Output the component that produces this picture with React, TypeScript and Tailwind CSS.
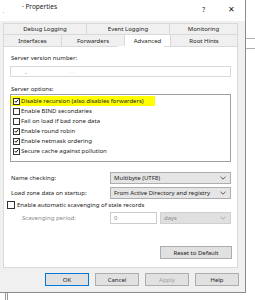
import React from "react";

function Check({ checked, className = "" }: { checked?: boolean; className?: string }) {
  return (
    <div className={"w-[7px] h-[7px] border border-[#333333] bg-white flex items-center justify-center shrink-0 " + className}>
      {checked && (
        <svg width="6" height="6" viewBox="0 0 6 6">
          <polyline points="0.8,3 2.3,4.6 5.2,1.2" fill="none" stroke="#000" strokeWidth="1.1" />
        </svg>
      )}
    </div>
  );
}

function Chevron({ color = "#333" }: { color?: string }) {
  return (
    <svg width="6" height="4" viewBox="0 0 6 4">
      <polyline points="0.5,0.8 3,3.2 5.5,0.8" fill="none" stroke={color} strokeWidth="0.8" />
    </svg>
  );
}

function ListItem({ label, checked, hl }: { label: string; checked?: boolean; hl?: boolean }) {
  return (
    <div className={"h-[10px] flex items-center gap-[1px] pl-[2px] " + (hl ? "bg-[#ffff00] w-[144px]" : "")}>
      <Check checked={checked} />
      <span className="leading-[8px] whitespace-nowrap">{label}</span>
    </div>
  );
}

function Btn({ label, def, disabled, className = "" }: { label: string; def?: boolean; disabled?: boolean; className?: string }) {
  return (
    <div
      className={
        "h-[13px] flex items-center justify-center border bg-[#e1e1e1] " +
        (def ? "border-[#0078d7] " : "border-[#adadad] ") +
        (disabled ? "text-[#a0a0a0] " : "text-[#222222] ") +
        className
      }
    >
      <span className="leading-[8px]">{label}</span>
    </div>
  );
}

function Tab({ label, w, selected }: { label: string; w: string; selected?: boolean }) {
  return (
    <div
      className={
        "h-full flex items-center justify-center border-t border-l border-[#d9d9d9] " +
        (selected ? "bg-white " : "bg-[#f0f0f0] ") +
        w
      }
    >
      <span className="leading-[8px] whitespace-nowrap">{label}</span>
    </div>
  );
}

export default function App() {
  return (
    <div className="w-[255px] h-[300px] bg-white relative overflow-hidden text-[6px] text-[#222222] font-['Segoe_UI','Noto_Sans',sans-serif]">
      {/* background window lines */}
      <div className="absolute left-[246px] top-[38px] w-[9px] h-px bg-[#b0b0b0]" />
      <div className="absolute left-[246px] top-[48px] w-[9px] h-px bg-[#b0b0b0]" />
      <div className="absolute left-[5px] top-[293px] w-px h-[7px] bg-[#9a9a9a]" />
      <div className="absolute left-[7px] top-[293px] w-px h-[7px] bg-[#9a9a9a]" />

      <div className="w-[246px] h-[293px] border-r border-b border-[#8c8c8c] bg-[#f0f0f0] flex flex-col">
        {/* title bar */}
        <div className="h-[21px] bg-white flex items-start relative">
          <div className="absolute left-[3px] top-[12px] w-px h-px bg-[#c8c8c8]" />
          <span className="ml-[22px] mt-[3px] leading-[8px] text-[6.5px]">· Properties</span>
          <span className="ml-auto mt-[6px] leading-[8px] text-[6.5px] mr-[23px]">?</span>
          <span className="mt-[5px] leading-[8px] text-[8px] mr-[10px] font-light">✕</span>
        </div>

        {/* tabs */}
        <div className="mt-[2px] ml-[3px] w-[235px] flex flex-col">
          <div className="h-[11px] flex border-r border-[#d9d9d9]">
            <Tab label="Debug Logging" w="w-[83px]" />
            <Tab label="Event Logging" w="w-[83px]" />
            <Tab label="Monitoring" w="flex-1" />
          </div>
          <div className="h-[12px] flex border-r border-[#d9d9d9]">
            <Tab label="Interfaces" w="w-[58px]" />
            <Tab label="Forwarders" w="w-[63px]" />
            <Tab label="Advanced" w="w-[46px]" selected />
            <Tab label="Root Hints" w="flex-1" />
          </div>
        </div>

        {/* panel */}
        <div className="ml-[3px] w-[235px] h-[222px] bg-white border border-t-0 border-[#d9d9d9] flex flex-col px-[6px]">
          <div className="h-px flex">
            <div className="w-[114px] bg-[#d9d9d9] ml-[-6px]" />
            <div className="w-[46px]" />
            <div className="flex-1 bg-[#d9d9d9] -mr-[6px]" />
          </div>
          <div className="mt-[7px] ml-[1px] leading-[8px]">Server version number:</div>
          <div className="mt-[4px] h-[11px] border border-[#d9d9d9] flex items-center relative">
            <span className="ml-[14px] leading-[6px] text-[#444]">.</span>
            <span className="ml-[42px] leading-[6px] text-[#c8c8c8] text-[5px]">· · ·</span>
          </div>
          <div className="mt-[8px] ml-[1px] leading-[8px]">Server options:</div>
          <div className="mt-[1px] h-[68px] border border-[#a0a0a0] flex flex-col pt-[1px]">
            <ListItem label="Disable recursion (also disables forwarders)" checked hl />
            <ListItem label="Enable BIND secondaries" />
            <ListItem label="Fail on load if bad zone data" />
            <ListItem label="Enable round robin" checked />
            <ListItem label="Enable netmask ordering" checked />
            <ListItem label="Secure cache against pollution" checked />
          </div>

          <div className="mt-[10px] h-[12px] flex items-center">
            <span className="ml-[1px] w-[99px] leading-[8px]">Name checking:</span>
            <div className="flex-1 h-full border border-[#adadad] bg-[#e5e5e5] flex items-center justify-between pl-[3px] pr-[4px]">
              <span className="leading-[8px]">Multibyte (UTF8)</span>
              <Chevron />
            </div>
          </div>
          <div className="mt-[3px] h-[12px] flex items-center">
            <span className="ml-[1px] w-[99px] leading-[8px]">Load zone data on startup:</span>
            <div className="flex-1 h-full border border-[#adadad] bg-[#e5e5e5] flex items-center justify-between pl-[3px] pr-[4px]">
              <span className="leading-[8px] whitespace-nowrap">From Active Directory and registry</span>
              <Chevron />
            </div>
          </div>
          <div className="mt-[2px] h-[8px] flex items-center -ml-[3px]">
            <Check className="w-[8px] h-[8px]" />
            <span className="ml-[2px] leading-[8px]">Enable automatic scavenging of stale records</span>
          </div>
          <div className="mt-[3px] h-[12px] flex items-center">
            <span className="ml-[12px] w-[88px] leading-[8px] text-[#8a8a8a]">Scavenging period:</span>
            <div className="w-[47px] h-full border border-[#cccccc] bg-white flex items-center pl-[3px]">
              <span className="leading-[8px] text-[#8a8a8a]">0</span>
            </div>
            <div className="ml-[3px] flex-1 h-full border border-[#d0d0d0] bg-[#e0e0e0] flex items-center justify-between pl-[3px] pr-[4px]">
              <span className="leading-[8px] text-[#8a8a8a]">days</span>
              <Chevron color="#9a9a9a" />
            </div>
          </div>
          <div className="mt-auto mb-[8px] flex justify-end">
            <Btn label="Reset to Default" className="w-[72px] mr-[-1px]" />
          </div>
        </div>

        {/* bottom buttons */}
        <div className="mt-[5px] flex gap-[6px] pl-[45px]">
          <Btn label="OK" def className="w-[44px]" />
          <Btn label="Cancel" className="w-[44px]" />
          <Btn label="Apply" disabled className="w-[44px]" />
          <Btn label="Help" className="w-[44px]" />
        </div>
      </div>
    </div>
  );
}
